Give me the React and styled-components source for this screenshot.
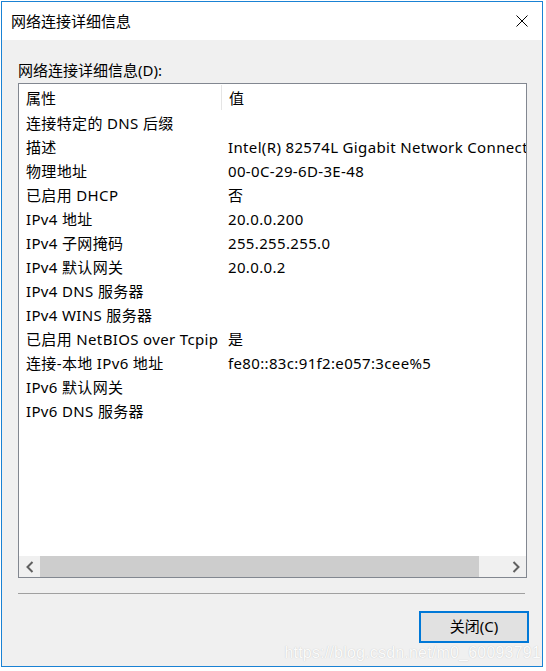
import React from 'react';
import styled, { createGlobalStyle } from 'styled-components';

const uiFont = `"Noto Sans", "Noto Sans CJK SC", sans-serif`;

const GlobalStyle = createGlobalStyle`
  html, body {
    margin: 0;
    padding: 0;
    background: #ffffff;
  }
  body {
    font-family: ${uiFont};
    color: #000;
  }
`;

const Window = styled.div`
  position: relative;
  width: 542px;
  height: 666px;
  margin: 1px 0 0 1px;
  box-sizing: border-box;
  border: 1px solid #1a82d4;
  display: flex;
  flex-direction: column;
  background: #f0f0f0;
`;

const TitleBar = styled.div`
  height: 38px;
  flex: none;
  background: #ffffff;
  display: flex;
  align-items: center;
  justify-content: space-between;
  padding: 0 14px 0 9px;
`;

const Title = styled.span`
  font-family: ${uiFont};
  font-size: 15px;
  line-height: 20px;
`;

const CloseIcon = styled.svg`
  width: 12px;
  height: 12px;
  display: block;
`;

const Body = styled.div`
  flex: 1;
  display: flex;
  flex-direction: column;
  padding: 20px 14px 0 16px;
`;

const Label = styled.div`
  font-family: ${uiFont};
  font-size: 15px;
  line-height: 20px;
  height: 20px;
  margin-bottom: 3px;
`;

const ListBox = styled.div`
  width: 509px;
  height: 495px;
  box-sizing: border-box;
  border: 1px solid #828790;
  background: #ffffff;
  display: flex;
  flex-direction: column;
  overflow: hidden;
`;

const Grid = styled.div`
  display: grid;
  grid-template-columns: 203px 1fr;
`;

const HeaderCell = styled.div`
  height: 27px;
  display: flex;
  align-items: center;
  padding-left: 7px;
  font-size: 15px;
  white-space: nowrap;
  box-sizing: border-box;
  position: relative;
  ${({ $divider }) => $divider && `
    &::after {
      content: '';
      position: absolute;
      right: 0;
      top: 1px;
      bottom: 1px;
      width: 1px;
      background: #e5e5e5;
    }
  `}
`;

const Cell = styled.div`
  height: 24px;
  line-height: 24px;
  padding-left: ${({ $value }) => ($value ? '6px' : '7px')};
  font-size: 15px;
  letter-spacing: 0.35px;
  white-space: nowrap;
  overflow: hidden;
`;

const Filler = styled.div`
  flex: 1;
`;

const HScroll = styled.div`
  height: 21px;
  flex: none;
  display: flex;
  background: #f0f0f0;
`;

const ArrowButton = styled.div`
  width: 21px;
  flex: none;
  display: flex;
  align-items: center;
  justify-content: center;
`;

const Track = styled.div`
  flex: 1;
  display: flex;
  padding: 0 ${({ $rest }) => $rest}px 0 0;
`;

const Thumb = styled.div`
  flex: 1;
  background: #cdcdcd;
`;

const Separator = styled.div`
  width: 507px;
  height: 1px;
  background: #a0a0a0;
  margin-top: 15px;
`;

const Footer = styled.div`
  display: flex;
  justify-content: flex-end;
  padding: 17px 0 0 0;
`;

const Button = styled.button`
  width: 110px;
  height: 32px;
  box-sizing: border-box;
  border: 2px solid #0078d7;
  background: #e1e1e1;
  font-family: ${uiFont};
  font-size: 15px;
  line-height: 20px;
  color: #000;
  padding: 0 0 2px;
  margin-right: -1px;
`;

const Watermark = styled.div`
  position: absolute;
  right: 1px;
  bottom: 4px;
  font-family: "Liberation Sans", Arial, sans-serif;
  font-size: 16px;
  color: #fbfbfb;
  text-shadow: 0 0 1px #bdbdbd;
  letter-spacing: 0.2px;
`;

const rows = [
  ['连接特定的 DNS 后缀', ''],
  ['描述', 'Intel(R) 82574L Gigabit Network Connection'],
  ['物理地址', '00-0C-29-6D-3E-48'],
  ['已启用 DHCP', '否'],
  ['IPv4 地址', '20.0.0.200'],
  ['IPv4 子网掩码', '255.255.255.0'],
  ['IPv4 默认网关', '20.0.0.2'],
  ['IPv4 DNS 服务器', ''],
  ['IPv4 WINS 服务器', ''],
  ['已启用 NetBIOS over Tcpip', '是'],
  ['连接-本地 IPv6 地址', 'fe80::83c:91f2:e057:3cee%5'],
  ['IPv6 默认网关', ''],
  ['IPv6 DNS 服务器', ''],
];

const Chevron = ({ dir }) => (
  <svg width="8" height="12" viewBox="0 0 8 12">
    <path
      d={dir === 'left' ? 'M6.5 1 L1.5 6 L6.5 11' : 'M1.5 1 L6.5 6 L1.5 11'}
      fill="none"
      stroke="#606060"
      strokeWidth="2"
    />
  </svg>
);

export default function App() {
  return (
    <>
      <GlobalStyle />
      <Window>
        <TitleBar>
          <Title>网络连接详细信息</Title>
          <CloseIcon viewBox="0 0 12 12">
            <path d="M0.5 0.5 L11.5 11.5 M11.5 0.5 L0.5 11.5" stroke="#000" strokeWidth="1" fill="none" />
          </CloseIcon>
        </TitleBar>
        <Body>
          <Label>网络连接详细信息(D):</Label>
          <ListBox>
            <Grid>
              <HeaderCell $divider>属性</HeaderCell>
              <HeaderCell>值</HeaderCell>
              {rows.map(([name, value]) => (
                <React.Fragment key={name}>
                  <Cell>{name}</Cell>
                  <Cell $value>{value}</Cell>
                </React.Fragment>
              ))}
            </Grid>
            <Filler />
            <HScroll>
              <ArrowButton><Chevron dir="left" /></ArrowButton>
              <Track $rest={26}>
                <Thumb />
              </Track>
              <ArrowButton><Chevron dir="right" /></ArrowButton>
            </HScroll>
          </ListBox>
          <Separator />
          <Footer>
            <Button>关闭(C)</Button>
          </Footer>
        </Body>
        <Watermark>https://blog.csdn.net/m0_60093791</Watermark>
      </Window>
    </>
  );
}
